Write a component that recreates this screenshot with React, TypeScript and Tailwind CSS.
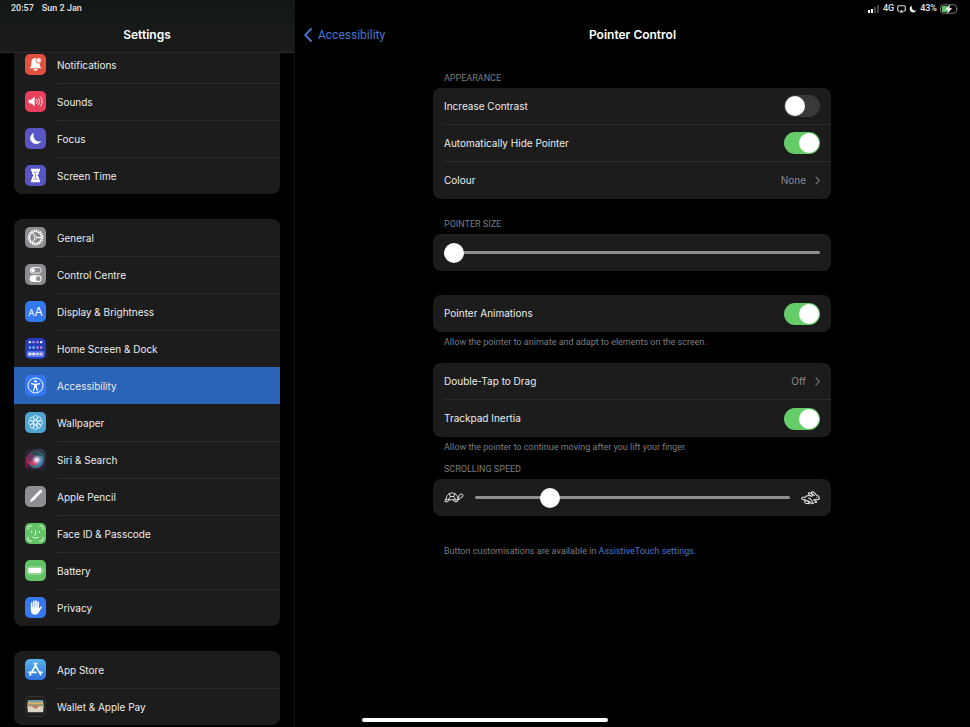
import { useId, useState, type ReactNode } from "react";

/* ---------- Sidebar icons, drawn on a 63-unit tile ---------- */

function Tile({ bg, children }: { bg: string; children: ReactNode }) {
  return (
    <svg viewBox="0 0 63 63" className={`size-[21px] shrink-0 rounded-[5px] ${bg}`} aria-hidden="true">
      {children}
    </svg>
  );
}

const NotificationsIcon = () => (
  <Tile bg="bg-[#e2513f]">
    <path fill="#fff" d="M31 12c-8 0-12 6-12 14 0 9-1 12-6 17h37c-5-5-6-8-6-17 0-8-5-14-13-14zM25 45h13a6.5 5 0 0 1-13 0z" />
    <circle cx="41" cy="19" r="8" fill="#fff" stroke="#e2513f" strokeWidth="2.5" />
  </Tile>
);

const SoundsIcon = () => (
  <Tile bg="bg-[#e5405c]">
    <path fill="#fff" d="M11 26h7l11-9v29l-11-9h-7z" />
    <g fill="none" stroke="#fff" strokeWidth="2.6" strokeLinecap="round">
      <path d="M35 26q4 5.500 0 11" />
      <path d="M41 22q7 9.500 0 19" />
      <path d="M47 18q10 13.500 0 27" />
    </g>
  </Tile>
);

const FocusIcon = () => (
  <Tile bg="bg-[#5756c4]">
    <path fill="#fff" d="M27 14C16 19 13 31 18 39c7 12 24 11 31 0-10 4-19-1-22-10-2-5-2-10 0-15z" />
  </Tile>
);

const ScreenTimeIcon = () => (
  <Tile bg="bg-[#5756c4]">
    <path fill="#fff" d="M18 11h27v7h-2c0 7-3 10-6 13.500 3 3.500 6 6.500 6 13.500h2v7H18v-7h2c0-7 3-10 6-13.500-3-3.500-6-6.500-6-13.500h-2z" />
    <path fill="none" stroke="#5756c4" strokeWidth="2" d="M26 22h11M31.500 26v13M25 42h13" />
  </Tile>
);

const GeneralIcon = () => (
  <Tile bg="bg-[#8b8b90]">
    <g fill="none" stroke="#fff">
      <circle cx="31.500" cy="31.500" r="22" strokeWidth="4.500" strokeDasharray="4 2.910" />
      <circle cx="31.500" cy="31.500" r="18" strokeWidth="3.500" />
      <circle cx="31.500" cy="31.500" r="4" strokeWidth="2.500" />
      <path strokeWidth="3" d="M35 31.500h15M29.500 28L22 15.500M29.500 35L22 47.500" />
    </g>
  </Tile>
);

const ControlCentreIcon = () => (
  <Tile bg="bg-[#8b8b90]">
    <rect x="15.500" y="10.500" width="33" height="17" rx="8.500" fill="none" stroke="#fff" strokeWidth="2.500" />
    <circle cx="24" cy="19" r="6" fill="#fff" />
    <rect x="14" y="34" width="36" height="20" rx="10" fill="#fff" />
    <circle cx="40" cy="44" r="7" fill="#8b8b90" />
  </Tile>
);

const DisplayIcon = () => (
  <span
    aria-hidden="true"
    className="flex size-[21px] shrink-0 items-baseline justify-center rounded-[5px] bg-[#3478ef] leading-[21px] text-white"
  >
    <span className="text-[9px]">A</span>
    <span className="text-[12px]">A</span>
  </span>
);

const HomeScreenIcon = () => (
  <Tile bg="bg-[#223cba]">
    <rect x="6" y="40" width="51" height="17" rx="4" fill="#5f7fe6" />
    <g fill="#e9ecff">
      <rect x="11" y="9" width="7" height="7" rx="2" />
      <rect x="45" y="9" width="7" height="7" rx="2" />
      <rect x="11" y="44" width="8" height="8" rx="2" />
      <rect x="22" y="44" width="8" height="8" rx="2" />
      <rect x="33" y="44" width="8" height="8" rx="2" fill="#bcd0ff" />
      <rect x="44" y="44" width="8" height="8" rx="2" fill="#f0c0cf" />
      <rect x="22" y="9" width="7" height="7" rx="2" fill="#b08be8" />
      <rect x="34" y="9" width="7" height="7" rx="2" fill="#d488c8" />
      <rect x="11" y="25" width="7" height="7" rx="2" fill="#86b4ff" />
      <rect x="22" y="25" width="7" height="7" rx="2" fill="#8fb8ff" />
      <rect x="34" y="25" width="7" height="7" rx="2" fill="#b08be8" />
      <rect x="45" y="25" width="7" height="7" rx="2" fill="#ee7f93" />
    </g>
  </Tile>
);

const AccessibilityIcon = () => (
  <Tile bg="bg-[#3478f6]">
    <circle cx="31.500" cy="31.500" r="22.500" fill="none" stroke="#fff" strokeWidth="3" />
    <circle cx="31.500" cy="19" r="4" fill="#fff" />
    <path
      fill="none"
      stroke="#fff"
      strokeWidth="3.500"
      strokeLinecap="round"
      strokeLinejoin="round"
      d="M19 26l9 2h7l9-2M29 28v9l-4 11M34 28v9l4 11M31.500 28v9"
    />
  </Tile>
);

const petals = [0, 45, 90, 135, 180, 225, 270, 315];

const WallpaperIcon = () => (
  <Tile bg="bg-[#4fa5d0]">
    <g fill="none" stroke="#e8f6ff" strokeWidth="2.500">
      {petals.map((angle) => (
        <ellipse key={angle} cx="31.500" cy="17.500" rx="6.500" ry="7" transform={`rotate(${angle} 31.500 31.500)`} />
      ))}
      <circle cx="31.500" cy="31.500" r="6" strokeWidth="3" />
    </g>
  </Tile>
);

const SiriIcon = () => (
  <Tile bg="bg-[#2a2335]">
    <defs>
      <linearGradient id="siri-orb" x1="0" y1="0.2" x2="1" y2="0.8">
        <stop offset="0" stopColor="#8c1d4c" />
        <stop offset="0.4" stopColor="#56406a" />
        <stop offset="0.7" stopColor="#2a8a92" />
        <stop offset="1" stopColor="#3566d0" />
      </linearGradient>
      <radialGradient id="siri-glow" cx="0.58" cy="0.52" r="0.34">
        <stop offset="0" stopColor="#fff" />
        <stop offset="0.35" stopColor="#e9d6ee" stopOpacity="0.85" />
        <stop offset="1" stopColor="#c05a9a" stopOpacity="0" />
      </radialGradient>
    </defs>
    <path fill="#7a1738" d="M0 18Q14 32 6 63H0z" />
    <path fill="#2b4a55" opacity="0.6" d="M20 0h43v34Q50 6 20 0z" />
    <circle cx="31.500" cy="31.500" r="25" fill="url(#siri-orb)" />
    <path fill="#10504d" opacity="0.8" d="M18 11q20-10 35 11-16-7-24 4-1-10-11-15z" />
    <path fill="#e0365f" opacity="0.85" d="M9 38q14-4 24-5 8 8 2 16-18 3-26-11z" />
    <circle cx="31.500" cy="31.500" r="25" fill="url(#siri-glow)" />
    <circle cx="31.500" cy="31.500" r="25" fill="none" stroke="#9aa0b0" strokeOpacity="0.55" strokeWidth="1.500" />
  </Tile>
);

const PencilIcon = () => (
  <Tile bg="bg-[#8e8e93]">
    <path fill="#fff" d="M14 49l5-11 25-25q4-3 6 0 3 3 0 6L25 44z" />
  </Tile>
);

const FaceIdIcon = () => (
  <Tile bg="bg-[#62c466]">
    <g fill="none" stroke="#fff" strokeWidth="2.600" strokeLinecap="round" strokeLinejoin="round">
      <path d="M9 19v-5q0-5 5-5h5M44 9h5q5 0 5 5v5M54 44v5q0 5-5 5h-5M19 54h-5q-5 0-5-5v-5" />
      <path d="M20 24v5M43 24v5M32 23v11q0 2-3 2M23 43q8.500 6 17 0" />
    </g>
  </Tile>
);

const BatteryTileIcon = () => (
  <Tile bg="bg-[#62c466]">
    <rect x="7" y="20" width="45" height="23" rx="6" fill="none" stroke="#fff" strokeOpacity="0.5" strokeWidth="2" />
    <rect x="10" y="23" width="39" height="17" rx="4" fill="#fff" />
    <path fill="#fff" d="M54 28q4 3.500 0 7z" />
  </Tile>
);

const PrivacyIcon = () => (
  <Tile bg="bg-[#3577ee]">
    <g fill="none" stroke="#fff" strokeWidth="5" strokeLinecap="round">
      <path d="M20 18v18M26.500 13v20M33 12v20M39.500 16v18" />
      <path d="M41 41l7-10" />
    </g>
    <path fill="#fff" d="M17.500 31H42v5l3.500-2Q43 53 30 53q-12.500 0-12.500-14z" />
  </Tile>
);

const AppStoreIcon = () => (
  <Tile bg="bg-linear-to-b from-[#57b4ec] to-[#3070dc]">
    <g fill="none" stroke="#fff" strokeWidth="5" strokeLinecap="round">
      <path d="M35 13L21 38M28 13l19 34M12 40h21M43 40h8M17 45l-2 3" />
    </g>
  </Tile>
);

const WalletIcon = () => (
  <Tile bg="bg-[#1e1e1d]">
    <rect x="1" y="1" width="61" height="61" rx="14" fill="none" stroke="#464635" strokeWidth="2" />
    <rect x="8" y="12" width="47" height="20" rx="3" fill="#6f9aa8" />
    <path fill="#d8b264" d="M8 19h47v16H8z" />
    <path fill="#8aa878" d="M8 24h47v12H8z" />
    <path fill="#c6745c" d="M8 28h47v12H8z" />
    <path fill="#d9d5c6" d="M8 31h12q3 0 4 3 7 8 15 0 1-3 4-3h12v15q0 3-3 3H11q-3 0-3-3z" />
  </Tile>
);

/* ---------- Other glyphs ---------- */

const TurtleIcon = () => (
  <svg viewBox="0 0 60 34" className="h-[11px] w-5 shrink-0" fill="none" stroke="#e8e8e8" strokeWidth="3" strokeLinejoin="round" strokeLinecap="round" aria-hidden="true">
    <path d="M6 23C6 10 14 3 24 3s17 6 19 20z" />
    <path d="M16 6l3 8-6 9M33 6l-4 8 6 9M19 14h10" />
    <path d="M43 20q2-14 9-14 6 0 6 5 0 5-7 6-2 7-9 7M5 21q-4 3-3 9h9l4-6M28 24l4 6h8l2-6" />
  </svg>
);

const HareIcon = () => (
  <svg viewBox="0 0 57 42" className="h-[14px] w-[19px] shrink-0" fill="none" stroke="#e8e8e8" strokeWidth="3.200" strokeLinejoin="round" strokeLinecap="round" aria-hidden="true">
    <path d="M35 14Q30 3 33 2q7 0 13 10 9 3 9 9 0 5-7 5H37" />
    <path d="M40 13Q29 4 22 6q-1 3 10 10" />
    <path d="M30 15q-12-4-18 4-9-2-10 4 1 4 8 3" />
    <path d="M10 25q4 5 12 5l9 7q6 2 6-1l-7-9q-1-6-8-6" />
    <path d="M12 29q-3 6 3 8l10 1q1-4-4-6M40 27l6 5q3 3-5 2" />
    <circle cx="47" cy="19" r="1" fill="#e8e8e8" strokeWidth="1" />
  </svg>
);

const Chevron = () => (
  <svg viewBox="0 0 5 9" className="h-[9px] w-[5px] shrink-0" fill="none" stroke="#6c6c70" strokeWidth="1.200" strokeLinecap="round" strokeLinejoin="round" aria-hidden="true">
    <path d="M1 1l3.300 3.500L1 8" />
  </svg>
);

/* ---------- Sidebar ---------- */

type Item = { label: string; icon: () => ReactNode };

const groups: Item[][] = [
  [
    { label: "Notifications", icon: NotificationsIcon },
    { label: "Sounds", icon: SoundsIcon },
    { label: "Focus", icon: FocusIcon },
    { label: "Screen Time", icon: ScreenTimeIcon },
  ],
  [
    { label: "General", icon: GeneralIcon },
    { label: "Control Centre", icon: ControlCentreIcon },
    { label: "Display & Brightness", icon: DisplayIcon },
    { label: "Home Screen & Dock", icon: HomeScreenIcon },
    { label: "Accessibility", icon: AccessibilityIcon },
    { label: "Wallpaper", icon: WallpaperIcon },
    { label: "Siri & Search", icon: SiriIcon },
    { label: "Apple Pencil", icon: PencilIcon },
    { label: "Face ID & Passcode", icon: FaceIdIcon },
    { label: "Battery", icon: BatteryTileIcon },
    { label: "Privacy", icon: PrivacyIcon },
  ],
  [
    { label: "App Store", icon: AppStoreIcon },
    { label: "Wallet & Apple Pay", icon: WalletIcon },
  ],
];

const selected = "Accessibility";

function Sidebar() {
  return (
    <aside className="flex w-[295px] shrink-0 flex-col border-r border-[#161616]">
      <header className="shrink-0 border-b border-[#272827] bg-linear-to-b from-[#121816] to-[#1a1b1a]">
        <div className="flex h-[17px] items-center gap-2 pl-[11px] font-[Roboto,sans-serif] text-[9px] font-medium text-[#e6e6e6]">
          <span>20:57</span>
          <span>Sun 2 Jan</span>
        </div>
        <h1 className="flex h-[35px] items-center justify-center text-[12px] font-semibold text-white">Settings</h1>
      </header>
      <nav className="min-h-0 flex-1 overflow-hidden pr-[14px] pl-[14px]">
        <div className="-mt-[7px] flex flex-col gap-[25px]">
          {groups.map((group, g) => (
            <ul key={g} className="overflow-hidden rounded-lg bg-[#1c1c1d]">
              {group.map(({ label, icon: Icon }, i) => {
                const active = label === selected;
                const line = i > 0 && !active && group[i - 1].label !== selected;
                return (
                  <li key={label}>
                    <a
                      href="#"
                      aria-current={active ? "page" : undefined}
                      className={`flex h-[37px] items-center gap-[11px] pl-[11px] ${active ? "bg-[#2b63b7]" : ""}`}
                    >
                      <Icon />
                      <span
                        className={`flex h-full flex-1 items-center border-t text-[10px] text-[#ececec] ${
                          line ? "border-[#2b2b2d]" : "border-transparent"
                        }`}
                      >
                        {label}
                      </span>
                    </a>
                  </li>
                );
              })}
            </ul>
          ))}
        </div>
      </nav>
    </aside>
  );
}

/* ---------- Detail pane ---------- */

function StatusIcons() {
  return (
    <div className="flex h-[17px] items-center justify-end gap-[3px] pr-[11px] font-[Roboto,sans-serif] text-[9px] font-medium text-[#e6e6e6]">
      <svg viewBox="0 0 12 8" className="h-2 w-3" aria-hidden="true">
        <rect x="0" y="5" width="2" height="3" fill="#fff" />
        <rect x="3" y="4" width="2" height="4" fill="#fff" />
        <rect x="6" y="2" width="2" height="6" fill="#444" />
        <rect x="9" y="0" width="2" height="8" fill="#444" />
      </svg>
      <span>4G</span>
      <svg viewBox="0 0 9 8" className="h-2 w-[9px]" aria-hidden="true">
        <path d="M2.500 6H1.700Q.700 6 .700 5V1.700q0-1 1-1h5.600q1 0 1 1V5q0 1-1 1h-.800" fill="none" stroke="#ddd" strokeWidth="1.100" />
        <path d="M4.500 4.800L6.800 7.600H2.200z" fill="#ddd" />
      </svg>
      <svg viewBox="0 0 8 8" className="size-2" aria-hidden="true">
        <path fill="#eee" d="M2.800.500C.200 1.700.200 5 1.700 6.500 3.500 8.200 6.500 7.600 7.500 5.500 5 6.200 2 4.500 2.800.500z" />
      </svg>
      <span>43%</span>
      <svg viewBox="0 0 19 10" className="h-[10px] w-[19px]" aria-hidden="true">
        <rect x=".500" y=".800" width="16" height="8.400" rx="2.500" fill="none" stroke="#777" />
        <rect x="1.800" y="2" width="6" height="6" rx="1.300" fill="#62c466" />
        <path d="M17.600 3.500q1.300 1.500 0 3z" fill="#777" />
        <path d="M9.900.400L5.300 5.700h2.600L7.200 9.700l5-5.500H9.400z" fill="#fff" />
      </svg>
    </div>
  );
}

const Card = ({ children }: { children: ReactNode }) => (
  <div className="divide-y divide-[#2b2b2d] overflow-hidden rounded-lg bg-[#1c1c1d] pl-[11px]">{children}</div>
);

const Caption = ({ children }: { children: ReactNode }) => (
  <h3 className="mb-[3px] px-[11px] font-[Roboto,sans-serif] text-[9px] leading-[14px] text-[#7d7d82]">{children}</h3>
);

const Note = ({ children }: { children: ReactNode }) => (
  <p className="mt-[3px] px-[11px] font-[Roboto,sans-serif] text-[9px] leading-[14px] text-[#7d7d82]">{children}</p>
);

function ToggleRow({ label, initial }: { label: string; initial: boolean }) {
  const id = useId();
  const [on, setOn] = useState(initial);
  return (
    <div className="flex h-[37px] items-center justify-between pr-[11px]">
      <label htmlFor={id} className="text-[10px] text-[#ececec]">
        {label}
      </label>
      <input
        id={id}
        type="checkbox"
        role="switch"
        checked={on}
        onChange={(e) => setOn(e.target.checked)}
        className="h-[22px] w-9 appearance-none rounded-full bg-[#39393c] p-px before:block before:size-5 before:rounded-full before:bg-white before:content-[''] checked:bg-[#65cd68] checked:before:translate-x-[14px]"
      />
    </div>
  );
}

function LinkRow({ label, value }: { label: string; value: string }) {
  return (
    <button type="button" className="flex h-[37px] w-full items-center pr-[11px] text-[10px]">
      <span className="flex-1 text-left text-[#ececec]">{label}</span>
      <span className="mr-[9px] text-[#8a8a8f]">{value}</span>
      <Chevron />
    </button>
  );
}

function Slider({ label, initial }: { label: string; initial: number }) {
  const [value, setValue] = useState(initial);
  return (
    <input
      type="range"
      aria-label={label}
      min={0}
      max={100}
      value={value}
      onChange={(e) => setValue(Number(e.target.value))}
      className="h-[3px] min-w-0 flex-1 appearance-none rounded-full bg-[#8f8f92] [&::-webkit-slider-thumb]:size-5 [&::-webkit-slider-thumb]:appearance-none [&::-webkit-slider-thumb]:rounded-full [&::-webkit-slider-thumb]:bg-white"
    />
  );
}

function Detail() {
  return (
    <main className="flex min-w-0 flex-1 flex-col">
      <header className="shrink-0">
        <StatusIcons />
        <div className="grid h-9 grid-cols-[1fr_auto_1fr] items-center px-[9px]">
          <a href="#" className="flex items-center gap-[6px] font-[Roboto,sans-serif] text-[12px] text-[#4479cf]">
            <svg viewBox="0 0 8 14" className="h-[14px] w-2" fill="none" stroke="currentColor" strokeWidth="1.800" strokeLinecap="round" strokeLinejoin="round" aria-hidden="true">
              <path d="M7 1L1.200 7 7 13" />
            </svg>
            Accessibility
          </a>
          <h2 className="text-[12px] font-semibold text-white">Pointer Control</h2>
        </div>
      </header>

      <div className="pt-[18px] pr-px">
        <div className="mx-auto w-full max-w-[398px]">
          <section>
            <Caption>APPEARANCE</Caption>
            <Card>
              <ToggleRow label="Increase Contrast" initial={false} />
              <ToggleRow label="Automatically Hide Pointer" initial={true} />
              <LinkRow label="Colour" value="None" />
            </Card>
          </section>

          <section className="mt-[18px]">
            <Caption>POINTER SIZE</Caption>
            <Card>
              <div className="flex h-[37px] items-center pr-[11px]">
                <Slider label="Pointer size" initial={0} />
              </div>
            </Card>
          </section>

          <section className="mt-6">
            <Card>
              <ToggleRow label="Pointer Animations" initial={true} />
            </Card>
            <Note>Allow the pointer to animate and adapt to elements on the screen.</Note>
          </section>

          <section className="mt-[14px]">
            <Card>
              <LinkRow label="Double-Tap to Drag" value="Off" />
              <ToggleRow label="Trackpad Inertia" initial={true} />
            </Card>
            <Note>Allow the pointer to continue moving after you lift your finger.</Note>
          </section>

          <section className="mt-2">
            <Caption>SCROLLING SPEED</Caption>
            <Card>
              <div className="flex h-[37px] items-center gap-[11px] pr-[11px]">
                <TurtleIcon />
                <Slider label="Scrolling speed" initial={22} />
                <HareIcon />
              </div>
            </Card>
          </section>

          <p className="mt-7 px-[11px] font-[Roboto,sans-serif] text-[9px] leading-[14px] text-[#7d7d82]">
            Button customisations are available in{" "}
            <a href="#" className="text-[#4479cf]">
              AssistiveTouch settings.
            </a>
          </p>
        </div>
      </div>
    </main>
  );
}

export default function App() {
  return (
    <div className="relative flex h-screen overflow-hidden bg-black font-[Inter,'Liberation_Sans',sans-serif]">
      <Sidebar />
      <Detail />
      <div className="absolute bottom-[5px] left-1/2 h-1 w-[246px] -translate-x-1/2 rounded-full bg-white" />
    </div>
  );
}
